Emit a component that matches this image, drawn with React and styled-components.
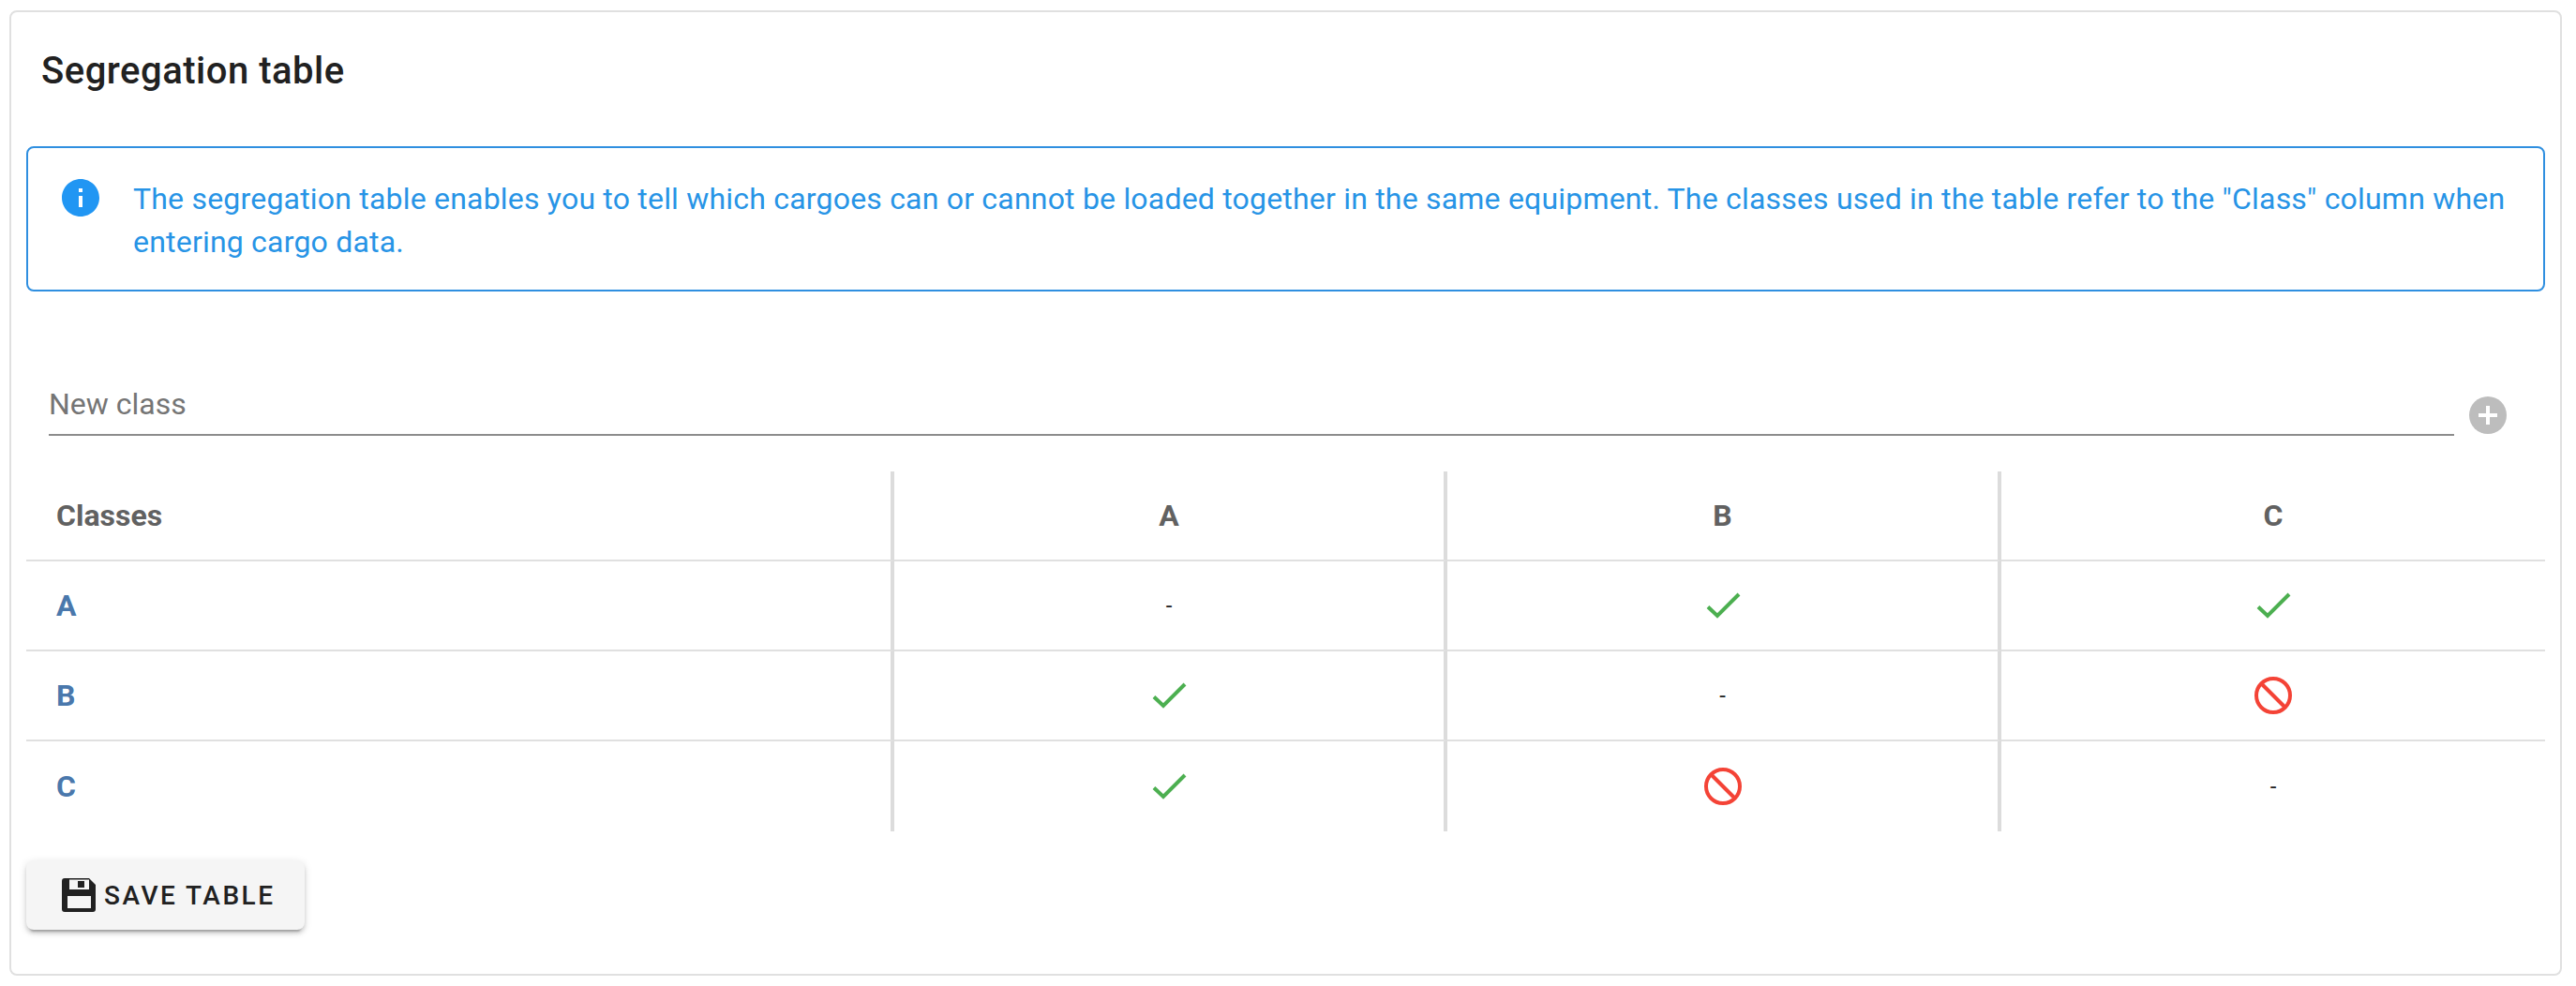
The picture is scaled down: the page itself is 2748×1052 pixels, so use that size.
import React from 'react'
import styled, {createGlobalStyle} from 'styled-components'

const GlobalStyle = createGlobalStyle`
  html, body {
    margin: 0;
    background: #fff;
    font-family: Roboto, "Liberation Sans", sans-serif;
  }
`

const Page = styled.div`
  padding: 11px 15px 11px 10px;
  box-sizing: border-box;
  height: 1052px;
`

const Card = styled.section`
  box-sizing: border-box;
  height: 1030px;
  border: 2px solid #e0e0e0;
  border-radius: 8px;
  padding: 0 16px;
`

const Title = styled.h2`
  margin: 0;
  padding: 35px 16px 0;
  height: 143px;
  box-sizing: border-box;
  font-size: 40px;
  line-height: 56px;
  font-weight: 500;
  letter-spacing: 0.5px;
  color: #212121;
`

const Alert = styled.div`
  display: flex;
  box-sizing: border-box;
  height: 155px;
  border: 2px solid #2f8fe0;
  border-radius: 8px;
  padding: 31px 32px 0 34px;
  gap: 34px;
  color: #2794e6;
`

const AlertIcon = styled.svg`
  width: 48px;
  height: 48px;
  flex: none;
  margin: -2px -2px 0 -2px;
  fill: #2196f3;
`

const AlertText = styled.p`
  margin: 0;
  font-size: 32px;
  line-height: 46px;
  letter-spacing: 0.2px;
`

const NewClassRow = styled.div`
  display: flex;
  align-items: flex-start;
  margin-top: 84px;
  padding-left: 24px;
`

const NewClassField = styled.div`
  flex: 1;
  height: 70px;
  box-sizing: border-box;
  border-bottom: 2px solid #8c8c8c;
  font-size: 32px;
  line-height: 72px;
  color: #757575;
`

const AddButton = styled.span`
  display: flex;
  align-items: center;
  justify-content: center;
  width: 40px;
  height: 40px;
  margin: 28px 41px 0 16px;
  border-radius: 50%;
  background: #bdbdbd;
`

const Table = styled.table`
  width: 100%;
  margin-top: 38px;
  border-collapse: separate;
  border-spacing: 0;
  table-layout: fixed;
  font-size: 32px;
`

const HeadCell = styled.th`
  height: 96px;
  padding: 0;
  box-sizing: border-box;
  border-bottom: 2px solid #e0e0e0;
  border-right: ${p => (p.$last ? '0' : '4px solid #dcdcdc')};
  font-weight: 700;
  color: #616161;
  text-align: center;
`

const HeadLabel = styled(HeadCell)`
  padding-left: 32px;
  text-align: left;
`

const Cell = styled.td`
  height: 96px;
  padding: 0;
  box-sizing: border-box;
  border-bottom: ${p => (p.$bottom ? '0' : '2px solid #e0e0e0')};
  border-right: ${p => (p.$last ? '0' : '4px solid #dcdcdc')};
  text-align: center;
  font-size: 24px;
  color: #212121;
`

const RowLabel = styled(Cell).attrs({as: 'th'})`
  padding-left: 32px;
  text-align: left;
  font-size: 32px;
  font-weight: 700;
  color: #4a78ac;
`

const StatusIcon = styled.svg`
  display: inline-block;
  vertical-align: middle;
  width: 48px;
  height: 48px;
`

const SaveButton = styled.button`
  display: flex;
  align-items: center;
  box-sizing: border-box;
  width: 297px;
  height: 74px;
  margin-top: 31px;
  padding: 0 0 0 38px;
  gap: 9px;
  border: 0;
  border-radius: 8px;
  background: #f5f5f5;
  box-shadow: 0 6px 2px -4px rgba(0, 0, 0, 0.2), 0 4px 4px 0 rgba(0, 0, 0, 0.14), 0 2px 10px 0 rgba(0, 0, 0, 0.12);
  font-family: Roboto, "Liberation Sans", sans-serif;
  font-size: 28px;
  font-weight: 500;
  letter-spacing: 2.5px;
  color: #212121;
`

const SaveIcon = styled.svg`
  width: 36px;
  height: 36px;
  flex: none;
`

function Check() {
    return (
        <StatusIcon viewBox="0 0 48 48">
            <path d="M8 25.5l10 9.5L41 12" fill="none" stroke="#4caf50" strokeWidth="4"/>
        </StatusIcon>
    )
}

function Blocked() {
    return (
        <StatusIcon viewBox="0 0 48 48">
            <circle cx="24" cy="24" r="18" fill="none" stroke="#f44336" strokeWidth="4"/>
            <path d="M11.5 11.5l25 25" fill="none" stroke="#f44336" strokeWidth="4"/>
        </StatusIcon>
    )
}

const classes = ['A', 'B', 'C']
const matrix = [
    ['-', 'ok', 'ok'],
    ['ok', '-', 'no'],
    ['ok', 'no', '-'],
]

function Status({value}) {
    if (value === 'ok') return <Check/>
    if (value === 'no') return <Blocked/>
    return '-'
}

export default function App() {
    return (
        <>
            <GlobalStyle/>
            <Page>
                <Card>
                    <Title>Segregation table</Title>
                    <Alert>
                        <AlertIcon viewBox="0 0 24 24">
                            <path d="M12 2C6.48 2 2 6.48 2 12s4.48 10 10 10 10-4.48 10-10S17.52 2 12 2zm1 15h-2v-6h2v6zm0-8h-2V7h2v2z"/>
                        </AlertIcon>
                        <AlertText>
                            The segregation table enables you to tell which cargoes can or cannot be loaded together in the same equipment. The classes used in the table refer to the "Class" column when entering cargo data.
                        </AlertText>
                    </Alert>
                    <NewClassRow>
                        <NewClassField>New class</NewClassField>
                        <AddButton>
                            <svg width="24" height="24" viewBox="0 0 24 24">
                                <path d="M12 2v20M2 12h20" stroke="#fff" strokeWidth="4"/>
                            </svg>
                        </AddButton>
                    </NewClassRow>
                    <Table>
                        <colgroup>
                            <col style={{width: 926}}/>
                            <col style={{width: 590}}/>
                            <col style={{width: 591}}/>
                            <col/>
                        </colgroup>
                        <thead>
                            <tr>
                                <HeadLabel>Classes</HeadLabel>
                                {classes.map((c, i) => (
                                    <HeadCell key={c} $last={i === 2}>{c}</HeadCell>
                                ))}
                            </tr>
                        </thead>
                        <tbody>
                            {classes.map((c, r) => (
                                <tr key={c}>
                                    <RowLabel $bottom={r === 2}>{c}</RowLabel>
                                    {matrix[r].map((v, i) => (
                                        <Cell key={i} $last={i === 2} $bottom={r === 2}>
                                            <Status value={v}/>
                                        </Cell>
                                    ))}
                                </tr>
                            ))}
                        </tbody>
                    </Table>
                    <SaveButton>
                        <SaveIcon viewBox="0 0 36 36">
                            <path fillRule="evenodd" fill="#212121" d="M3 0H29L36 7V33a3 3 0 0 1-3 3H3a3 3 0 0 1-3-3V3a3 3 0 0 1 3-3zM8 1.5V12H29V1.5zM17 3V10H24V3zM6 19V32H31V19z"/>
                        </SaveIcon>
                        SAVE TABLE
                    </SaveButton>
                </Card>
            </Page>
        </>
    )
}
